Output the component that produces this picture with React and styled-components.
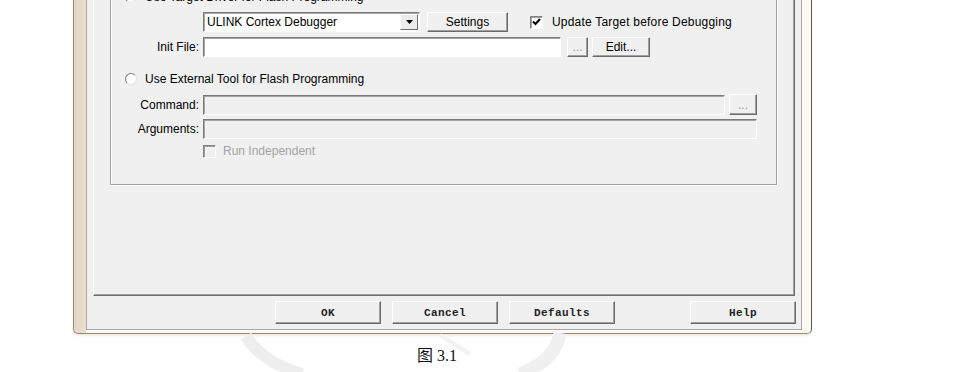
import React from 'react';
import styled, { createGlobalStyle } from 'styled-components';

const GlobalStyle = createGlobalStyle`
  html, body {
    margin: 0;
    padding: 0;
    background: #fff;
  }
  body {
    font-family: "Liberation Sans", Arial, sans-serif;
    font-size: 12px;
    color: #000;
  }
`;

const Page = styled.div`
  position: relative;
  width: 956px;
  height: 372px;
  overflow: hidden;
  background: #fff;
`;

const Window = styled.div`
  margin: -37px 0 0 73px;
  width: 739px;
  box-sizing: border-box;
  padding: 0 9px 3px 12px;
  border: 1px solid #8f8880;
  border-top: none;
  border-right-color: #5a5a5a;
  border-radius: 0 0 5px 5px;
  background: linear-gradient(to right, #e3d6c4 0, #eadfcf 12px, #fbfaf1 12px);
  box-shadow: 0 2px 2px #f6ecdc;
`;

const Dialog = styled.div`
  width: 716px;
  box-sizing: border-box;
  border: 1px solid #a9a9a9;
  background: #f0f0f0;
  padding: 6px 6px 5px 6px;
`;

const TabPanel = styled.div`
  border: 1px solid #fff;
  border-right-color: #6d6d6d;
  border-bottom-color: #6d6d6d;
  box-shadow: inset -1px -1px 0 #a0a0a0;
  padding: 8px 17px 110px 16px;
`;

const GroupBox = styled.div`
  border: 1px solid #a0a0a0;
  box-shadow: 1px 1px 0 #fff, inset 1px 1px 0 #fff;
  padding: 10px 0 26px 14px;
`;

const OptionRow = styled.div`
  display: flex;
  align-items: center;
  gap: 8px;
  height: 14px;
  margin-top: ${p => p.$top || 0}px;
`;

const Radio = styled.span`
  width: 10px;
  height: 10px;
  border-radius: 50%;
  border: 1px solid;
  border-color: #7b7b7b #e3e3e3 #e3e3e3 #7b7b7b;
  background: #fff;
  flex: none;
`;

const FieldRow = styled.div`
  display: flex;
  align-items: center;
  margin-top: ${p => p.$top || 0}px;
  margin-left: -14px;
`;

const Label = styled.span`
  width: 88px;
  text-align: right;
  margin-right: 4px;
  flex: none;
`;

const Input = styled.div`
  width: ${p => p.$w}px;
  height: 20px;
  box-sizing: border-box;
  border: 1px solid;
  border-color: #7a7a7a #fff #fff #7a7a7a;
  box-shadow: inset 1px 1px 0 #a6a6a6;
  background: ${p => (p.$disabled ? '#f0f0f0' : '#fff')};
  margin-right: ${p => p.$mr || 0}px;
  flex: none;
`;

const Combo = styled(Input)`
  display: flex;
  align-items: center;
  justify-content: space-between;
  padding: 0 1px 0 3px;
`;

const DropButton = styled.span`
  width: 18px;
  height: 16px;
  box-sizing: border-box;
  border: 1px solid;
  border-color: #fff #6d6d6d #6d6d6d #fff;
  background: #ececec;
  display: flex;
  align-items: center;
  justify-content: center;
`;

const Button = styled.div`
  width: ${p => p.$w}px;
  height: ${p => p.$h || 20}px;
  box-sizing: border-box;
  border: 1px solid;
  border-color: #fff #6a6a6a #6a6a6a #fff;
  box-shadow: inset -1px -1px 0 #a0a0a0;
  background: #f0f0f0;
  display: flex;
  align-items: center;
  justify-content: center;
  color: ${p => (p.$faint ? '#9a9a9a' : '#000')};
  margin-right: ${p => p.$mr || 0}px;
  flex: none;
`;

const CheckBox = styled.span`
  width: 13px;
  height: 13px;
  box-sizing: border-box;
  border: 1px solid;
  border-color: #808080 #fff #fff #808080;
  box-shadow: inset 1px 1px 0 #a0a0a0;
  background: ${p => (p.$disabled ? '#f0f0f0' : '#fff')};
  display: flex;
  align-items: center;
  justify-content: center;
  flex: none;
`;

const CheckLabel = styled.span`
  margin-left: ${p => p.$gap || 9}px;
  color: ${p => (p.$disabled ? '#a3a3a3' : '#000')};
  letter-spacing: ${p => (p.$wide ? 0.2 : 0)}px;
`;

const Spacer = styled.span`
  width: ${p => p.$w}px;
  flex: none;
`;

const ButtonBar = styled.div`
  display: flex;
  padding-top: 5px;
  padding-left: 182px;
`;

const DialogButton = styled(Button)`
  width: 106px;
  height: 23px;
  font-family: "Liberation Mono", "Courier New", monospace;
  font-weight: bold;
  font-size: 11px;
  letter-spacing: 0.4px;
  color: #222;
  margin-left: ${p => p.$ml || 0}px;
`;

const Caption = styled.div`
  margin: 8px 0 0 417px;
  font-family: "Liberation Serif", "Noto Sans CJK SC", serif;
  font-size: 16px;
  color: #111;
`;

const Watermark = styled.svg`
  position: absolute;
  left: 0;
  top: 0;
  pointer-events: none;
`;

const Arrow = () => (
  <svg width="7" height="4" viewBox="0 0 7 4">
    <path d="M0 0h7L3.5 4z" fill="#000" />
  </svg>
);

const Tick = () => (
  <svg width="9" height="8" viewBox="0 0 9 8">
    <path d="M1 3.5l2.5 2.5L8 1" fill="none" stroke="#000" strokeWidth="2" />
  </svg>
);

export default function App() {
  return (
    <Page>
      <GlobalStyle />
      <Window>
        <Dialog>
          <TabPanel>
            <GroupBox>
              <OptionRow>
                <Radio />
                <span>Use Target Driver for Flash Programming</span>
              </OptionRow>
              <FieldRow $top={8}>
                <Label />
                <Combo $w={217} $mr={7}>
                  <span>ULINK Cortex Debugger</span>
                  <DropButton><Arrow /></DropButton>
                </Combo>
                <Button $w={81}>Settings</Button>
                <Spacer $w={22} />
                <CheckBox><Tick /></CheckBox>
                <CheckLabel $wide>Update Target before Debugging</CheckLabel>
              </FieldRow>
              <FieldRow $top={5}>
                <Label>Init File:</Label>
                <Input $w={358} $mr={6} />
                <Button $w={21} $mr={4} $faint>...</Button>
                <Button $w={58}>Edit...</Button>
              </FieldRow>
              <OptionRow $top={15}>
                <Radio />
                <span>Use External Tool for Flash Programming</span>
              </OptionRow>
              <FieldRow $top={8}>
                <Label>Command:</Label>
                <Input $w={522} $mr={4} $disabled />
                <Button $w={28} $h={21} $faint>...</Button>
              </FieldRow>
              <FieldRow $top={4}>
                <Label>Arguments:</Label>
                <Input $w={554} $disabled />
              </FieldRow>
              <FieldRow $top={5}>
                <Label />
                <CheckBox $disabled />
                <CheckLabel $gap={7} $disabled>Run Independent</CheckLabel>
              </FieldRow>
            </GroupBox>
          </TabPanel>
          <ButtonBar>
            <DialogButton>OK</DialogButton>
            <DialogButton $ml={11}>Cancel</DialogButton>
            <DialogButton $ml={11}>Defaults</DialogButton>
            <DialogButton $ml={75}>Help</DialogButton>
          </ButtonBar>
        </Dialog>
      </Window>
      <Caption>图 3.1</Caption>
      <Watermark width="956" height="372" viewBox="0 0 956 372">
        <path d="M246 336 Q262 362 302 374" fill="none" stroke="#eeeeee" strokeWidth="12" />
        <path d="M560 333 Q556 360 520 374" fill="none" stroke="#f0f0f0" strokeWidth="13" />
        <path d="M440 335 L470 354" fill="none" stroke="#f2f2f2" strokeWidth="4" />
      </Watermark>
    </Page>
  );
}
